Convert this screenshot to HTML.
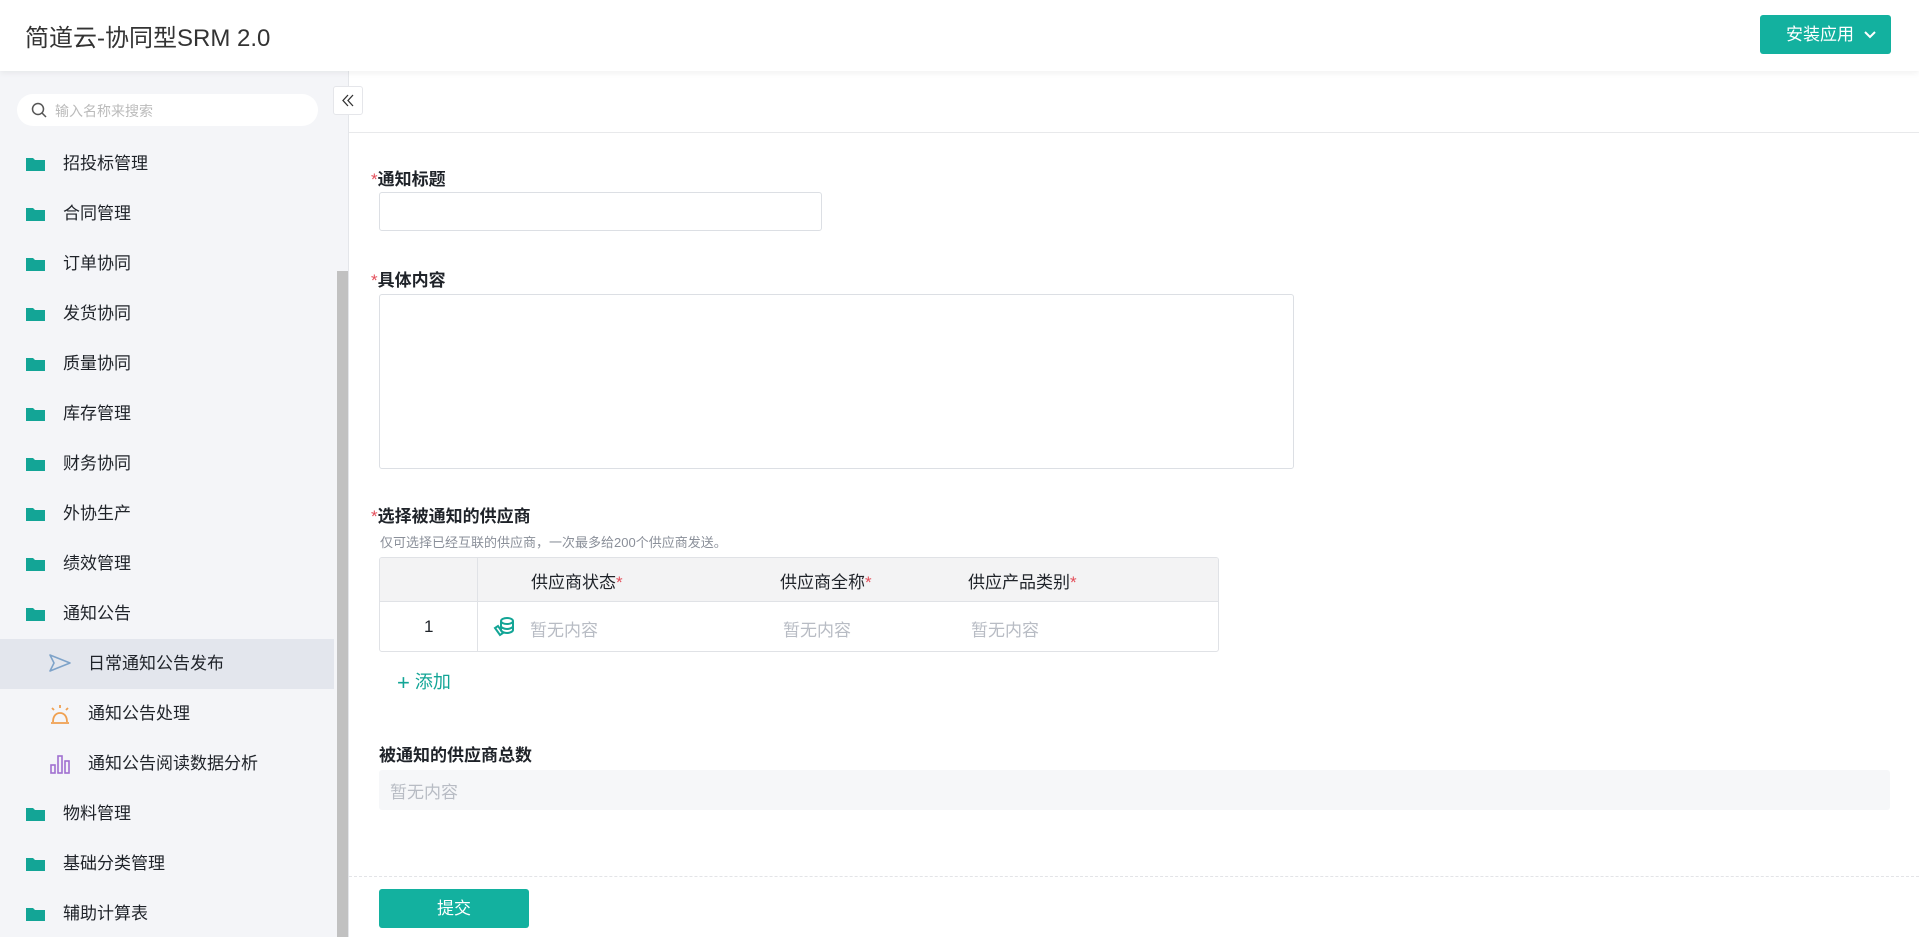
<!DOCTYPE html><html><head><meta charset="utf-8"><style>
*{box-sizing:border-box;margin:0;padding:0}
body{width:1919px;height:937px;overflow:hidden;background:#fff;font-family:"Liberation Sans","Noto Sans CJK SC",sans-serif;color:#1f2329;position:relative}
.abs{position:absolute}
.hdr{left:0;top:0;width:1919px;height:71px;background:#fff;box-shadow:0 2px 6px rgba(0,0,0,.06);z-index:2}
.side{left:0;top:71px;width:349px;height:866px;background:#f4f5f8;border-right:1px solid #e4e6ea}
.mi{position:absolute;left:0;width:334px;height:50px;font-size:17px;line-height:50px;color:#1f2329}
.mi .t{position:absolute;left:63px}
.sub .t{left:88px}
.fold{position:absolute;left:26px;top:18px;width:19px;height:14px}
.lab{font-size:17px;font-weight:bold;color:#1f2329}
.lab b{color:#e34d59;font-weight:normal}
.gray{color:#b8bcc4;font-size:17px}
</style></head><body>
<div class="abs hdr">
 <div class="abs" style="left:25px;top:18px;font-size:24px;color:#333">简道云-协同型SRM 2.0</div>
 <div class="abs" style="left:1760px;top:15px;width:131px;height:39px;background:#13b19f;border-radius:3px;color:#fff;font-size:17px;line-height:39px;padding-left:26px">安装应用 <svg width="14" height="10" viewBox="0 0 14 10" style="margin-left:4px"><path d="M2 2l5 5 5-5" stroke="#fff" stroke-width="2" fill="none"/></svg></div>
</div>
<div class="abs side">
 <div class="abs" style="left:17px;top:23px;width:301px;height:32px;background:#fff;border-radius:16px">
  <svg class="abs" style="left:14px;top:8px" width="16" height="16" viewBox="0 0 16 16"><circle cx="7" cy="7" r="5.5" stroke="#555" stroke-width="1.5" fill="none"/><path d="M11 11l4 4" stroke="#555" stroke-width="1.5"/></svg>
  <span class="abs" style="left:38px;top:7px;font-size:14px;color:#bbb">输入名称来搜索</span>
 </div>
 <div class="abs" style="left:337px;top:200px;width:11px;height:666px;background:#c1c1c1"></div>
</div>
<div class="abs" style="left:333px;top:86px;width:30px;height:29px;background:#fff;border:1px solid #e5e6ea;border-radius:3px;z-index:3"><svg width="28" height="27" viewBox="0 0 28 27"><path d="M14 8l-5 5.5 5 5.5M19 8l-5 5.5 5 5.5" stroke="#333" stroke-width="1.3" fill="none"/></svg></div>
<div id="menu" class="abs" style="left:0;top:0"></div>
<div class="abs" style="left:349px;top:132px;width:1570px;height:1px;background:#e8e9eb"></div>
<div class="abs lab" style="left:371px;top:165px"><b>*</b>通知标题</div>
<div class="abs" style="left:379px;top:192px;width:443px;height:39px;border:1px solid #dcdfe4;border-radius:3px"></div>
<div class="abs lab" style="left:371px;top:266px"><b>*</b>具体内容</div>
<div class="abs" style="left:379px;top:294px;width:915px;height:175px;border:1px solid #dcdfe4;border-radius:3px"></div>
<div class="abs lab" style="left:371px;top:502px"><b>*</b>选择被通知的供应商</div>
<div class="abs" style="left:380px;top:532px;font-size:13px;color:#8a8f99">仅可选择已经互联的供应商，一次最多给200个供应商发送。</div>
<div class="abs" style="left:379px;top:557px;width:840px;height:95px;border:1px solid #e0e2e6;border-radius:3px;overflow:hidden">
 <div class="abs" style="left:0;top:0;width:840px;height:44px;background:#f3f3f4;border-bottom:1px solid #e0e2e6"></div>
 <div class="abs" style="left:97px;top:0;width:1px;height:95px;background:#e0e2e6"></div>
 <div class="abs" style="left:151px;top:10px;font-size:17px">供应商状态<b style="color:#e34d59;font-weight:normal">*</b></div>
 <div class="abs" style="left:400px;top:10px;font-size:17px">供应商全称<b style="color:#e34d59;font-weight:normal">*</b></div>
 <div class="abs" style="left:588px;top:10px;font-size:17px">供应产品类别<b style="color:#e34d59;font-weight:normal">*</b></div>
 <div class="abs" style="left:44px;top:59px;font-size:17px">1</div>
 <svg class="abs" style="left:113px;top:58px" width="22" height="22" viewBox="0 0 22 22"><ellipse cx="14" cy="5" rx="6" ry="3" stroke="#13a596" stroke-width="2" fill="none"/><path d="M8 5v9c0 1.5 3 3 6 3s6-1.5 6-3V5M8 10c0 1.5 3 3 6 3s6-1.5 6-3" stroke="#13a596" stroke-width="2" fill="none"/><path d="M2 12l5 7 3-2-5-7z" stroke="#13a596" stroke-width="2" fill="none"/></svg>
 <div class="abs gray" style="left:150px;top:58px">暂无内容</div>
 <div class="abs gray" style="left:403px;top:58px">暂无内容</div>
 <div class="abs gray" style="left:591px;top:58px">暂无内容</div>
</div>
<div class="abs" style="left:397px;top:668px;font-size:18px;color:#13a596"><span style="font-size:22px;vertical-align:-2px">+</span> 添加</div>
<div class="abs lab" style="left:379px;top:741px">被通知的供应商总数</div>
<div class="abs" style="left:379px;top:770px;width:1511px;height:40px;background:#f6f7f9;border-radius:3px"><span class="gray" style="position:absolute;left:11px;top:8px">暂无内容</span></div>
<div class="abs" style="left:349px;top:876px;width:1570px;border-top:1px dashed #e3e4e7"></div>
<div class="abs" style="left:379px;top:889px;width:150px;height:39px;background:#13b19f;border-radius:3px;color:#fff;font-size:17px;line-height:39px;text-align:center">提交</div>
<script>
var items=["招投标管理","合同管理","订单协同","发货协同","质量协同","库存管理","财务协同","外协生产","绩效管理","通知公告",
{t:"日常通知公告发布",i:'<svg width="24" height="20" viewBox="0 0 24 20"><path d="M2 2l20 8-20 8 4-8z" stroke="#7ea3c9" stroke-width="1.6" fill="none" stroke-linejoin="round"/></svg>',a:1},
{t:"通知公告处理",i:'<svg width="24" height="22" viewBox="0 0 24 22"><path d="M5 19c0-6 3-9 7-9s7 3 7 9M3 20h18M12 2v3M4 5l2 2M20 5l-2 2" stroke="#f0a050" stroke-width="1.8" fill="none"/></svg>'},
{t:"通知公告阅读数据分析",i:'<svg width="24" height="22" viewBox="0 0 24 22"><rect x="3" y="12" width="4" height="8" stroke="#a070d0" stroke-width="1.6" fill="none"/><rect x="10" y="3" width="4" height="17" stroke="#a070d0" stroke-width="1.6" fill="none"/><rect x="17" y="8" width="4" height="12" stroke="#a070d0" stroke-width="1.6" fill="none"/></svg>'},
"物料管理","基础分类管理","辅助计算表"];
var h="";items.forEach(function(it,k){var top=139+k*50;
if(typeof it=="string"){h+='<div class="mi" style="top:'+top+'px"><svg class="fold" viewBox="0 0 19 14"><path d="M0 1h7l2 2h10v11H0z" fill="#13a596"/></svg><span class="t">'+it+'</span></div>';}
else{h+='<div class="mi sub" style="top:'+top+'px;'+(it.a?'background:#e3e6ed':'')+'"><span style="position:absolute;left:48px;top:14px;line-height:0">'+it.i+'</span><span class="t">'+it.t+'</span></div>';}});
document.getElementById("menu").innerHTML=h;
</script>
</body></html>
